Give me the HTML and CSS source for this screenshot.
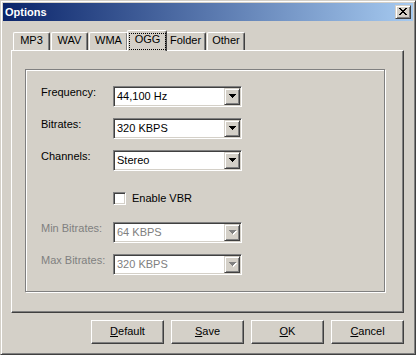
FILE: index.html
```html
<!DOCTYPE html>
<html>
<head>
<meta charset="utf-8">
<title>Options</title>
<link rel="stylesheet" href="styles.css">
</head>
<body>
<div class="window">
  <div class="titlebar">
    <span class="title">Options</span>
    <div class="close">
      <svg width="8" height="7" viewBox="0 0 8 7" shape-rendering="crispEdges"><path d="M0 0h2v1h-2zM6 0h2v1h-2zM1 1h2v1h-2zM5 1h2v1h-2zM2 2h4v1h-4zM3 3h2v1h-2zM2 4h4v1h-4zM1 5h2v1h-2zM5 5h2v1h-2zM0 6h2v1h-2zM6 6h2v1h-2z" fill="#000"/></svg>
    </div>
  </div>
  <div class="tabs">
    <div class="tab t-mp3">MP3</div>
    <div class="tab t-wav">WAV</div>
    <div class="tab t-wma">WMA</div>
    <div class="tab-sel"><span class="focus">OGG</span></div>
    <div class="tab t-folder">Folder</div>
    <div class="tab t-other">Other</div>
  </div>
  <div class="panel">
    <div class="group">
      <div class="row">
        <span class="label">Frequency:</span>
        <div class="combo"><span class="value">44,100 Hz</span><span class="dd"><svg width="7" height="4" viewBox="0 0 7 4" shape-rendering="crispEdges"><path d="M0 0h7v1h-7zM1 1h5v1h-5zM2 2h3v1h-3zM3 3h1v1h-1z" fill="#000"/></svg></span></div>
      </div>
      <div class="row">
        <span class="label">Bitrates:</span>
        <div class="combo"><span class="value">320 KBPS</span><span class="dd"><svg width="7" height="4" viewBox="0 0 7 4" shape-rendering="crispEdges"><path d="M0 0h7v1h-7zM1 1h5v1h-5zM2 2h3v1h-3zM3 3h1v1h-1z" fill="#000"/></svg></span></div>
      </div>
      <div class="row">
        <span class="label">Channels:</span>
        <div class="combo"><span class="value">Stereo</span><span class="dd"><svg width="7" height="4" viewBox="0 0 7 4" shape-rendering="crispEdges"><path d="M0 0h7v1h-7zM1 1h5v1h-5zM2 2h3v1h-3zM3 3h1v1h-1z" fill="#000"/></svg></span></div>
      </div>
      <div class="check-row">
        <span class="checkbox"></span>
        <span class="check-label">Enable VBR</span>
      </div>
      <div class="row row-min disabled">
        <span class="label">Min Bitrates:</span>
        <div class="combo"><span class="value">64 KBPS</span><span class="dd"><svg width="8" height="5" viewBox="0 0 8 5" shape-rendering="crispEdges"><path d="M1 1h7v1h-7zM2 2h5v1h-5zM3 3h3v1h-3zM4 4h1v1h-1z" fill="#fff"/><path d="M0 0h7v1h-7zM1 1h5v1h-5zM2 2h3v1h-3zM3 3h1v1h-1z" fill="#808080"/></svg></span></div>
      </div>
      <div class="row row-max disabled">
        <span class="label">Max Bitrates:</span>
        <div class="combo"><span class="value">320 KBPS</span><span class="dd"><svg width="8" height="5" viewBox="0 0 8 5" shape-rendering="crispEdges"><path d="M1 1h7v1h-7zM2 2h5v1h-5zM3 3h3v1h-3zM4 4h1v1h-1z" fill="#fff"/><path d="M0 0h7v1h-7zM1 1h5v1h-5zM2 2h3v1h-3zM3 3h1v1h-1z" fill="#808080"/></svg></span></div>
      </div>
    </div>
  </div>
  <div class="buttons">
    <div class="btn"><u>D</u>efault</div>
    <div class="btn"><u>S</u>ave</div>
    <div class="btn"><u>O</u>K</div>
    <div class="btn"><u>C</u>ancel</div>
  </div>
</div>
</body>
</html>
```
FILE: styles.css
```css
* { box-sizing: border-box; }
html, body { margin: 0; padding: 0; background: #d4d0c8; }
body {
  font-family: "Liberation Sans", Arial, sans-serif;
  font-size: 11px;
  color: #000;
}
.window {
  width: 416px;
  height: 355px;
  background: #d4d0c8;
  border: 1px solid;
  border-color: #d4d0c8 #404040 #404040 #d4d0c8;
  box-shadow: inset 1px 1px 0 #fff, inset -1px -1px 0 #808080;
  padding: 2px;
  display: flex;
  flex-direction: column;
}
.titlebar {
  height: 18px;
  flex: none;
  display: flex;
  align-items: center;
  padding: 0 2px 0 2px;
  background: linear-gradient(to right, #0a246a, #a6caf0);
}
.title {
  flex: 1;
  color: #fff;
  font-weight: bold;
  line-height: 13px;
}
.close {
  width: 16px;
  height: 14px;
  background: #d4d0c8;
  border: 1px solid;
  border-color: #d4d0c8 #404040 #404040 #d4d0c8;
  box-shadow: inset 1px 1px 0 #fff, inset -1px -1px 0 #808080;
  padding: 2px 0 0 3px;
}
.close svg { display: block; }

.tabs {
  flex: none;
  height: 20px;
  margin-top: 9px;
  padding-left: 10px;
  display: flex;
  align-items: flex-end;
}
.tab {
  height: 18px;
  margin-right: 1px;
  border-left: 1px solid #fff;
  border-top: 1px solid #fff;
  border-right: 1px solid #404040;
  border-radius: 2px 2px 0 0;
  box-shadow: inset -1px 0 0 #808080;
  text-align: center;
  line-height: 13px;
  padding-top: 1px;
}
.t-mp3 { width: 37px; }
.t-wav { width: 37px; }
.t-wma { width: 39px; }
.t-folder { width: 41px; }
.t-other { width: 38px; }
.tab-sel {
  position: relative;
  z-index: 2;
  width: 40px;
  height: 21px;
  margin: 0 -2px -1px -2px;
  background: #d4d0c8;
  border-left: 1px solid #fff;
  border-top: 1px solid #fff;
  border-right: 1px solid #404040;
  border-radius: 2px 2px 0 0;
  box-shadow: inset -1px 0 0 #808080;
  padding: 2px 0 0 1px;
}
.focus {
  display: block;
  width: 37px;
  height: 17px;
  border: 1px dotted #000;
  text-align: center;
  line-height: 11px;
}

.panel {
  flex: none;
  width: 393px;
  height: 263px;
  margin-left: 8px;
  border: 1px solid;
  border-color: #fff #404040 #404040 #fff;
  box-shadow: inset -1px -1px 0 #808080;
  padding: 18px 0 0 13px;
}
.group {
  width: 360px;
  height: 223px;
  border: 1px solid #808080;
  box-shadow: inset 1px 1px 0 #fff, 1px 1px 0 #fff;
  padding: 16px 0 0 15px;
}
.row {
  display: flex;
  height: 21px;
  margin-bottom: 11px;
}
.label {
  width: 72px;
  line-height: 13px;
}
.combo {
  width: 129px;
  height: 21px;
  display: flex;
  background: #fff;
  border: 1px solid;
  border-color: #808080 #fff #fff #808080;
  box-shadow: inset 1px 1px 0 #404040, inset -1px -1px 0 #d4d0c8;
  padding: 1px;
}
.value {
  flex: 1;
  padding-left: 2px;
  line-height: 17px;
}
.dd {
  width: 16px;
  height: 17px;
  background: #d4d0c8;
  border: 1px solid;
  border-color: #d4d0c8 #404040 #404040 #d4d0c8;
  box-shadow: inset 1px 1px 0 #fff, inset -1px -1px 0 #808080;
  padding: 5px 0 0 4px;
}
.dd svg { display: block; }
.check-row {
  display: flex;
  align-items: center;
  height: 13px;
  margin: 21px 0 17px 72px;
}
.checkbox {
  width: 13px;
  height: 13px;
  background: #fff;
  border: 1px solid;
  border-color: #808080 #fff #fff #808080;
  box-shadow: inset 1px 1px 0 #404040, inset -1px -1px 0 #d4d0c8;
}
.check-label {
  margin-left: 6px;
  line-height: 13px;
}
.disabled .label,
.disabled .value { color: #808080; }

.buttons {
  flex: none;
  display: flex;
  gap: 7px;
  margin-top: 7px;
  padding-left: 88px;
}
.btn {
  width: 73px;
  height: 24px;
  border: 1px solid;
  border-color: #fff #404040 #404040 #fff;
  box-shadow: inset -1px -1px 0 #808080;
  text-align: center;
  line-height: 21px;
}
.btn u { text-decoration: underline; }
```
